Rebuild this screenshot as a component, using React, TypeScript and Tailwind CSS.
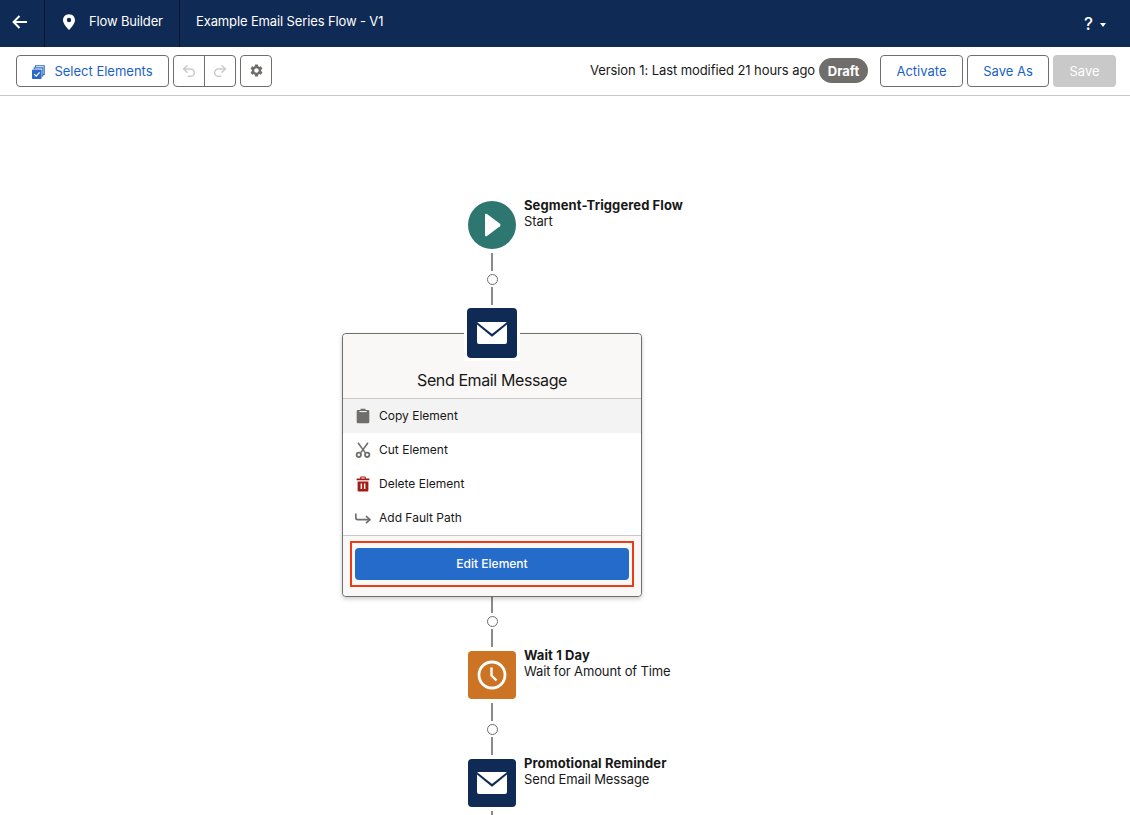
import { Undo2, Redo2 } from 'lucide-react'
import { MdSettings } from 'react-icons/md'

const Envelope = () => (
  <svg width="32" height="24" viewBox="0 0 32 24">
    <path d="M1 3.5 L1 21 Q1 23 3 23 L29 23 Q31 23 31 21 L31 3.5 L17 15 Q16 16 15 15 Z" fill="#fff" />
    <path d="M2 1 L30 1 Q31 1 30.5 1.6 L16.6 12.6 Q16 13.1 15.4 12.6 L1.5 1.6 Q1 1 2 1 Z" fill="#fff" />
  </svg>
)

const Connector = ({ short }: { short?: boolean }) => (
  <div className="flex flex-col items-center">
    <div className={short ? 'w-[2px] h-[16px] bg-[#8a8a8a]' : 'w-[2px] h-[18px] bg-[#8a8a8a]'} />
    <div className="w-[11px] h-[11px] mt-[3px] mb-[2px] rounded-full border border-[#706e6b] bg-white" />
    <div className="w-[2px] h-[18px] bg-[#8a8a8a]" />
  </div>
)

const NodeLabel = ({ title, sub }: { title: string; sub: string }) => (
  <div className="absolute left-[56px] -top-[4px] whitespace-nowrap text-[13px] leading-[16px] text-[#181818]">
    <div className="font-bold tracking-[0.1px]">{title}</div>
    <div className="tracking-[-0.13px]">{sub}</div>
  </div>
)

const menuItems = [
  {
    label: 'Copy Element',
    active: true,
    icon: (
      <svg width="16" height="16" viewBox="0 0 16 16" fill="#706e6b">
        <path d="M5.5 0.8 h5 v1.2 h2.6 q1.2 0 1.2 1.2 v10.8 q0 1.2 -1.2 1.2 H2.9 q-1.2 0 -1.2 -1.2 V3.2 q0 -1.2 1.2 -1.2 h2.6 z" />
        <rect x="4.4" y="3" width="7.2" height="1.1" fill="#f3f3f3" />
      </svg>
    ),
  },
  {
    label: 'Cut Element',
    icon: (
      <svg width="16" height="16" viewBox="0 0 16 16" fill="none" stroke="#706e6b" strokeWidth="1.6">
        <path d="M3 0.8 L10.2 10.6" />
        <path d="M13 0.8 L5.8 10.6" />
        <circle cx="3.8" cy="12.8" r="2.2" strokeWidth="1.8" />
        <circle cx="12.2" cy="12.8" r="2.2" strokeWidth="1.8" />
      </svg>
    ),
  },
  {
    label: 'Delete Element',
    icon: (
      <svg width="16" height="16" viewBox="0 0 16 16" fill="#a61a14">
        <path d="M6 0.6 h4 q0.8 0 0.8 0.8 v1 h3.6 v1.8 H1.6 V2.4 h3.6 v-1 q0 -0.8 0.8 -0.8 z M6.3 1.6 v0.8 h3.4 v-0.8 z" fillRule="evenodd" />
        <path d="M2.6 5.4 h10.8 v8.8 q0 1.2 -1.2 1.2 H3.8 q-1.2 0 -1.2 -1.2 z M5.6 7.4 v5.6 h1.5 v-5.6 z M8.9 7.4 v5.6 h1.5 v-5.6 z" fillRule="evenodd" />
      </svg>
    ),
  },
  {
    label: 'Add Fault Path',
    icon: (
      <svg width="16" height="16" viewBox="0 0 16 16" fill="none" stroke="#706e6b" strokeWidth="1.7">
        <path d="M0.8 3.4 V7.8 Q0.8 9.6 2.6 9.6 H14.4" />
        <path d="M11 6 L14.8 9.6 L11 13.2" />
      </svg>
    ),
  },
]

export default function App() {
  return (
    <div className="w-[1130px] h-[815px] overflow-hidden bg-white font-['Inter',sans-serif] text-[13px] text-[#181818]">
      <header className="h-[47px] bg-[#0f2a55] flex items-stretch text-white">
        <div className="w-[45px] border-r border-[#07172f] flex items-center justify-center pr-[5px] pb-[3px]">
          <svg width="16" height="14" viewBox="0 0 16 14" fill="none" stroke="#fff" strokeWidth="2">
            <path d="M15 7 H2" />
            <path d="M7.5 1 L1.6 7 L7.5 13" />
          </svg>
        </div>
        <div className="w-[135px] border-r border-[#07172f] flex items-center pl-[17px] gap-[13px] pb-[3px] tracking-[-0.15px]">
          <svg width="14" height="16" viewBox="0 0 14 16" fill="#fff">
            <path fillRule="evenodd" d="M7 0.2 C3.2 0.2 1 3 1 6 C1 9.6 5 14 6.4 15.4 Q7 16 7.6 15.4 C9 14 13 9.6 13 6 C13 3 10.8 0.2 7 0.2 Z M7 3.8 A2.2 2.2 0 1 1 7 8.2 A2.2 2.2 0 1 1 7 3.8 Z" />
          </svg>
          <span>Flow Builder</span>
        </div>
        <div className="flex-1 flex items-center pl-[16px] pb-[3px] tracking-[-0.13px]">Example Email Series Flow - V1</div>
        <div className="flex items-center pr-[24px] gap-[7px] pt-[2px]">
          <span className="text-[17px] font-medium leading-none">?</span>
          <svg width="6" height="4" viewBox="0 0 6 4" fill="#fff"><path d="M0 0 H6 L3 4 Z" /></svg>
        </div>
      </header>

      <div className="h-[49px] border-b border-[#c9c9c9] flex items-center pr-[14px] pl-[16px] pb-[1px]">
        <button className="w-[153px] h-[32px] pt-[2px] rounded border border-[#706e6b] flex items-center justify-center gap-[9px] text-[#1b62c5]">
          <svg width="13" height="14" viewBox="0 0 13 14" fill="none">
            <path d="M3.5 2.2 V0.8 H12.2 V9.5 H10.8" stroke="#2a69c5" strokeWidth="1.1" />
            <path d="M2 3.6 V2.6 H10.6 V10.6 H9.6" stroke="#2a69c5" strokeWidth="1.1" transform="translate(0.2 0.3)" />
            <rect x="0" y="4.5" width="9.6" height="9.5" rx="0.8" fill="#2a69c5" />
            <path d="M2.2 9.2 L4.2 11.2 L7.6 7.4" stroke="#fff" strokeWidth="1.2" />
          </svg>
          Select Elements
        </button>
        <div className="ml-[4px] h-[32px] w-[63px] rounded border border-[#706e6b] flex">
          <div className="w-[31px] border-r border-[#706e6b] flex items-center justify-center">
            <Undo2 size={16} color="#c9c9c9" strokeWidth={2.2} />
          </div>
          <div className="flex-1 flex items-center justify-center">
            <Redo2 size={16} color="#c9c9c9" strokeWidth={2.2} />
          </div>
        </div>
        <button className="ml-[4px] w-[32px] h-[32px] rounded border border-[#706e6b] flex items-center justify-center">
          <MdSettings size={15} color="#706e6b" />
        </button>
        <div className="ml-auto flex items-center">
          <span className="mr-[4px] pt-[1px] tracking-[-0.08px]">Version 1: Last modified 21 hours ago</span>
          <span className="h-[25px] w-[49px] pt-[2px] rounded-full bg-[#706e6b] text-white font-bold flex items-center justify-center mr-[12px]">Draft</span>
          <button className="h-[32px] w-[83px] pt-[2px] rounded border border-[#706e6b] text-[#1b62c5]">Activate</button>
          <button className="ml-[4px] h-[32px] w-[82px] pt-[2px] rounded border border-[#706e6b] text-[#1b62c5]">Save As</button>
          <button className="ml-[4px] h-[32px] w-[63px] pt-[2px] rounded bg-[#c9c9c9] text-white">Save</button>
        </div>
      </div>

      <main className="w-[984px] flex flex-col items-center pt-[105px]">
        <div className="relative w-[48px] h-[48px] rounded-full bg-[#2e7670] flex items-center justify-center">
          <svg width="16" height="24" viewBox="0 0 16 24" fill="#fff" className="ml-[1px]">
            <path d="M0 2 Q0 0 2 1 L15 10.8 Q16 12 15 13.2 L2 23 Q0 24 0 22 Z" />
          </svg>
          <NodeLabel title="Segment-Triggered Flow" sub="Start" />
        </div>
        <div className="mt-[4px]"><Connector /></div>

        <div className="relative mt-[28px] w-[300px] rounded border border-[#706e6b] bg-white shadow-[0_2px_4px_rgba(0,0,0,0.2)]">
          <div className="absolute -top-[29px] left-[121px] p-[3px] bg-white">
            <div className="w-[50px] h-[50px] rounded bg-[#0f2a55] flex items-center justify-center">
              <Envelope />
            </div>
          </div>
          <div className="h-[65px] bg-[#f9f8f6] rounded-t border-b border-[#c9c9c9] flex items-end justify-center pb-[6px] text-[16px] leading-[24px] tracking-[-0.39px]">
            Send Email Message
          </div>
          {menuItems.map((item) => (
            <div key={item.label} className={item.active ? 'h-[34px] flex items-center gap-[8px] pl-[12px] text-[12px] bg-[#f3f3f3]' : 'h-[34px] flex items-center gap-[8px] pl-[12px] text-[12px]'}>
              {item.icon}
              <span>{item.label}</span>
            </div>
          ))}
          <div className="h-[61px] bg-[#f9f8f6] rounded-b border-t border-[#c9c9c9] pt-[5px] pl-[7px]">
            <div className="w-[284px] h-[46px] border-2 border-[#ea3a16] flex items-center justify-center">
              <button className="w-[274px] h-[32px] rounded bg-[#256bc9] text-white text-[12px] font-medium">Edit Element</button>
            </div>
          </div>
        </div>

        <Connector short />
        <div className="relative w-[48px] h-[48px] rounded bg-[#cc7423] flex items-center justify-center mt-[4px]">
          <svg width="30" height="30" viewBox="0 0 30 30" fill="none" stroke="#fff">
            <circle cx="15" cy="15" r="13" strokeWidth="2.8" />
            <path d="M14.5 7.5 V15.5 L19.5 20.5" strokeWidth="2.4" />
          </svg>
          <NodeLabel title="Wait 1 Day" sub="Wait for Amount of Time" />
        </div>
        <div className="mt-[4px]"><Connector /></div>
        <div className="relative w-[48px] h-[48px] rounded bg-[#0f2a55] flex items-center justify-center mt-[4px]">
          <Envelope />
          <NodeLabel title="Promotional Reminder" sub="Send Email Message" />
        </div>
        <div className="mt-[4px] w-[2px] h-[18px] bg-[#8a8a8a]" />
      </main>
    </div>
  )
}
